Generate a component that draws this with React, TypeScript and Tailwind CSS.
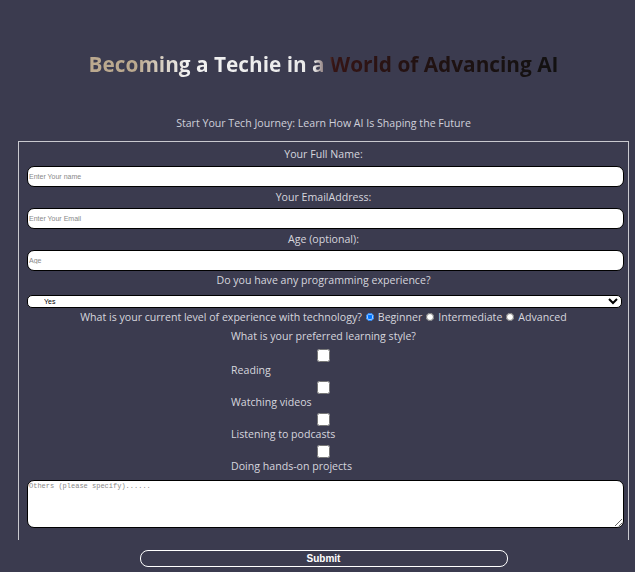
import React from "react";

const sans = "font-['Open_Sans','Noto_Sans',sans-serif]";

export default function App() {
  return (
    <div className={`min-h-[572px] w-full bg-[#3b3b4f] pl-[12px] ${sans}`}>
      <div className="flex flex-col items-center pt-[48px]">
        <h1 className="bg-[linear-gradient(90deg,#bba98f_0%,#bba98f_10%,#f2f2f2_21%,#e8e8e8_48%,#351414_52%,#221212_70%,#121111_100%)] bg-clip-text text-[20.8px] font-bold leading-[32px] text-transparent">
          Becoming a Techie in a World of Advancing AI
        </h1>
        <p className="mt-[35px] text-[10.6px] leading-[16px] text-[#cfd0da]">
          Start Your Tech Journey: Learn How AI Is Shaping the Future
        </p>
      </div>
      <form
        className="mx-[6px] mt-[10px] flex h-[399px] flex-col border border-b-0 border-[#c9c9cf] pt-[1px] text-[#d6d6de]"
        onSubmit={(e) => e.preventDefault()}
      >
        <label className="text-center text-[10.6px] leading-[23px]">Your Full Name:</label>
        <input
          className="ml-[8px] mr-[4px] h-[21px] rounded-[7px] border border-black bg-white px-[1px] font-['Liberation_Sans',sans-serif] text-[7px] text-black placeholder:text-[#888888] focus:outline-none"
          placeholder="Enter Your name"
        />
        <label className="text-center text-[10.6px] leading-[20px] pb-[1px]">Your EmailAddress:</label>
        <input
          className="ml-[8px] mr-[4px] h-[21px] rounded-[7px] border border-black bg-white px-[1px] font-['Liberation_Sans',sans-serif] text-[7px] text-black placeholder:text-[#888888] focus:outline-none"
          placeholder="Enter Your Email"
        />
        <label className="text-center text-[10.6px] leading-[20px] pb-[1px]">Age (optional):</label>
        <input
          className="ml-[8px] mr-[4px] h-[21px] rounded-[7px] border border-black bg-white px-[1px] font-['Liberation_Sans',sans-serif] text-[7px] text-black placeholder:text-[#888888] focus:outline-none"
          placeholder="Age"
        />
        <label className="pb-[6px] pt-[1px] text-center text-[10.6px] leading-[17px]">
          Do you have any programming experience?
        </label>
        <select
          className="ml-[8px] mr-[6px] h-[13px] rounded-[5px] border border-black bg-white pl-[12px] font-['Liberation_Sans',sans-serif] text-[7px] leading-[10px] text-black focus:outline-none"
          defaultValue="Yes"
        >
          <option>Yes</option>
          <option>No</option>
        </select>
        <div className="flex items-center justify-center text-[10.6px] leading-[18px]">
          <span>What is your current level of experience with technology?</span>
          <input type="radio" name="lvl" defaultChecked className="mx-[4px] h-[8px] w-[8px]" />
          <span>Beginner</span>
          <input type="radio" name="lvl" className="mx-[4px] h-[8px] w-[8px]" />
          <span>Intermediate</span>
          <input type="radio" name="lvl" className="mx-[4px] h-[8px] w-[8px]" />
          <span>Advanced</span>
        </div>
        <div className="mx-auto flex w-fit flex-col text-left text-[10.6px]">
          <span className="leading-[20px]">What is your preferred learning style?</span>
          {["Reading", "Watching videos", "Listening to podcasts", "Doing hands-on projects"].map(
            (t) => (
              <React.Fragment key={t}>
                <input type="checkbox" className="mx-auto my-[3px] block h-[13px] w-[13px]" />
                <span className="-mt-[1px] pb-[1px] leading-[13px]">{t}</span>
              </React.Fragment>
            )
          )}
        </div>
        <textarea
          className="ml-[8px] mr-[4px] mt-[6px] h-[48px] rounded-[7px] border border-black bg-white px-[1px] py-[1px] font-['Liberation_Mono',monospace] text-[7px] leading-[9px] text-black placeholder:text-[#888888] focus:outline-none"
          placeholder="Others (please specify)......"
        />
      </form>
      <div className="flex justify-center pt-[10px]">
        <button
          type="submit"
          className="h-[17px] w-[368px] rounded-[8px] border border-white bg-transparent font-['Liberation_Sans',sans-serif] text-[10px] font-bold leading-[15px] text-white"
        >
          Submit
        </button>
      </div>
    </div>
  );
}
